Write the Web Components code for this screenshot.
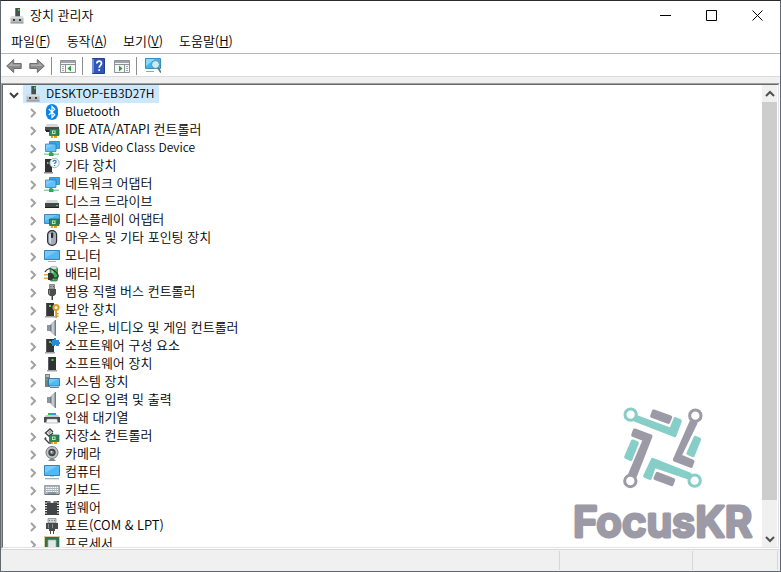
<!DOCTYPE html>
<html lang="ko">
<head>
<meta charset="utf-8">
<title>장치 관리자</title>
<style>
  html, body { height: 100%; margin: 0; }
  body {
    background: #4a4f58;
    color: #000;
    font: 350 13px/16px "Noto Sans CJK KR", sans-serif;
  }
  .latin { font-size: 12px; }
</style>
</head>
<body>
<app-window>
  <title-bar slot="title" icon="root">장치 관리자</title-bar>
  <menu-bar slot="menu">
    <menu-entry key="F">파일</menu-entry>
    <menu-entry key="A">동작</menu-entry>
    <menu-entry key="V">보기</menu-entry>
    <menu-entry key="H">도움말</menu-entry>
  </menu-bar>
  <tool-bar slot="tools"></tool-bar>
  <tree-panel>
    <tree-node icon="root" class="latin" root>DESKTOP-EB3D27H</tree-node>
    <brand-mark slot="overlay"></brand-mark>
  </tree-panel>
  <status-bar slot="status"></status-bar>
</app-window>

<script>
const DEVICES = [
  ['bluetooth', 'Bluetooth'],
  ['ide', 'IDE ATA/ATAPI 컨트롤러'],
  ['network', 'USB Video Class Device'],
  ['unknown', '기타 장치'],
  ['network', '네트워크 어댑터'],
  ['disk', '디스크 드라이브'],
  ['display', '디스플레이 어댑터'],
  ['mouse', '마우스 및 기타 포인팅 장치'],
  ['monitor', '모니터'],
  ['battery', '배터리'],
  ['usb', '범용 직렬 버스 컨트롤러'],
  ['security', '보안 장치'],
  ['speaker', '사운드, 비디오 및 게임 컨트롤러'],
  ['component', '소프트웨어 구성 요소'],
  ['software', '소프트웨어 장치'],
  ['system', '시스템 장치'],
  ['speaker', '오디오 입력 및 출력'],
  ['printer', '인쇄 대기열'],
  ['storage', '저장소 컨트롤러'],
  ['camera', '카메라'],
  ['computer', '컴퓨터'],
  ['keyboard', '키보드'],
  ['firmware', '펌웨어'],
  ['port', '포트(COM & LPT)'],
  ['cpu', '프로세서']
];

const card = `
  <path fill="#2d8a56" stroke="#1c5b38" stroke-width=".7" d="M5.500 7h9.500v6.500H5.500z"/>
  <path fill="#bfe6c8" d="M8 8.500h3.500V12H8z"/><path fill="#2a6a48" d="M9 9.500h1.500v1.500H9zM12.500 9h1.500v1h-1.500zM12.500 11h1.500v1h-1.500z"/>
  <path fill="#e8a316" d="M7 14h2v2H7zM10 14h3v2h-3z"/>`;

const tower = `
  <path fill="#333537" d="M2 1h8v13H2z"/><path fill="#55585a" d="M2 1h1v13H2z"/>
  <path fill="#3ee04a" d="M5 3h2v2H5z"/><path fill="#a2a5a8" d="M1 14h10v1.500H1z"/>`;

const ICONS = {
  root: `
    <path fill="#4c4f52" d="M6 0h5v9H6z"/><path fill="#777b7e" d="M6 0h1v9H6z"/><path fill="#35dc45" d="M9 1h1.500v2H9z"/>
    <path fill="#b8babc" d="M2 8.500h12l.5 2V15h-13v-4.500z"/><path fill="#dcdedf" d="M2 8.500h12v2H2z"/>
    <path fill="#3b3d3f" d="M4 11h2v2H4zM10 11h2v2h-2z"/><path fill="#85888a" d="M1.500 14.500h13v1h-13z"/>`,
  bluetooth: `
    <rect x="2" width="12" height="16" rx="6" fill="#0a84e8"/>
    <path fill="none" stroke="#fff" stroke-width="1.200" d="M4.800 5l6 5.800L8 13.500v-11l2.800 2.700-6 5.800"/>`,
  ide: `
    <path fill="#d4d6d8" d="M3 2h10l2 3H1z"/><path fill="#4a4d50" d="M1 5h14v4H1z"/>
    <path fill="#24272a" d="M2 8h5v2H2z"/>${card}`,
  network: `
    <path fill="#3aa5e8" stroke="#2273ab" stroke-width=".7" d="M5.500 1.500h10v7h-10z"/>
    <path fill="#5fc0fa" stroke="#2273ab" stroke-width=".7" d="M1.500 4h10.500v7.500H1.500z"/>
    <path fill="#9fdcff" d="M2 4.500h8L2 9z" opacity=".5"/>
    <path fill="#5a9c6e" d="M5.500 12h3v1h-3z"/><path fill="#8fd4a6" d="M0 13.500h15v1.500H0z"/><path fill="#2aa953" d="M5 13h4.500v3H5z"/>`,
  unknown: `
    <path fill="#2f3133" d="M1 1h7v13H1z"/><path fill="#3ee04a" d="M3 4h1.500v2H3z"/><path fill="#8a8d90" d="M0 14h9v1.500H0z"/>
    <circle cx="10.500" cy="5" r="4.700" fill="#f3f6f8" stroke="#9ba4aa" stroke-width=".8"/>
    <path fill="none" stroke="#3682b6" stroke-width="1.200" d="M9 3.800c.1-2 3.300-1.700 3.100 0-.1 1-1.500 1.100-1.500 2.200M10.600 7v1.100"/>`,
  disk: `
    <path fill="#d6d8da" d="M3 6h10l2 3.500H1z"/><path fill="#44474a" d="M1 9h14v5H1z"/>
    <path fill="#222" d="M1 13h14v1H1z"/><path fill="#3ee04a" d="M12 11h2v1h-2z"/>`,
  display: `
    <path fill="#4fb4f2" stroke="#2273ab" stroke-width=".8" d="M.500 2.500h15v9H.500z"/>
    <path fill="#8bd4ff" d="M1 3h12L1 9z" opacity=".6"/>${card}`,
  mouse: `
    <rect x="3.600" y=".6" width="9" height="14.800" rx="4.300" fill="#a5acb5" stroke="#2c3036" stroke-width="1.200"/>
    <path fill="#d2d7dd" d="M5 4h2v10C6 13.500 5 12 5 10z"/>
    <rect x="7" y="2.500" width="2.200" height="5.500" rx="1" fill="#25282c"/>`,
  monitor: `
    <path fill="#53b7f4" stroke="#2579b3" stroke-width=".9" d="M.500 2.500h15v9H.500z"/>
    <path fill="#9bdcff" d="M1 3h12L1 10z" opacity=".5"/><path fill="#97b7cc" d="M4 13h8v1H4z"/>`,
  battery: `
    <rect x="6" y="1" width="7.500" height="14" rx="1.500" fill="#3cae52" stroke="#27703a" stroke-width=".7"/>
    <path fill="#9ce3a8" d="M7.500 2h2v12h-2z"/><path fill="#d9dcde" d="M6.500 1h6v2h-6z"/>
    <path fill="none" stroke="#333" stroke-width="1.200" d="M1 6c2-4 6-4 8-2s4 2 5 5c1 3-2 4-6 2"/>
    <path fill="#333638" d="M4 7h3c2 0 3 1.500 3 3.500S9 14 7 14H4z"/><path fill="#e2ab39" d="M0 8h4v1.500H0zM0 11.500h4V13H0z"/>`,
  usb: `
    <path fill="#a5a8ab" stroke="#65686a" stroke-width=".7" d="M5.500.500h5V5h-5z"/><path fill="#55585a" d="M6.500 2h1v1h-1zM9 2h1v1H9z"/>
    <path fill="#4c4e50" d="M4 5h8v5l-2 2H6l-2-2z"/><path fill="#85878a" d="M5 6h1v4H5z"/><path fill="#3c3e40" d="M7.500 12h1.500v4H7.500z"/>`,
  security: `${tower}
    <circle cx="12" cy="5.500" r="2.600" fill="#fff" stroke="#d99c2b" stroke-width="2"/>
    <path fill="#d99c2b" d="M11.200 8h1.800v8h-1.800zM13 11h1.500v1.500H13zM13 13.500h1.500V15H13z"/>`,
  speaker: `
    <path fill="#8b959d" d="M3 5h3v6H3z"/><path fill="#9aa4ac" d="M6 5l5-5v16l-5-5z"/>
    <path fill="#c3cbd0" d="M8 3.500l2-2v13l-2-2z"/><path fill="#727d86" d="M11 0h1v16h-1zM6 5h1v6H6z"/>`,
  component: `${tower}
    <path fill="#2b8bd3" d="M8 2h2V0h2v2h3v2h1v2h-1v2h-3V7h-1v1H8V6H7V4h1z"/>`,
  software: `
    <path fill="#303234" d="M4 1h8v13H4z"/><path fill="#5c5f61" d="M4 1h1v13H4z"/>
    <path fill="#3ee04a" d="M7.500 3h2v2h-2z"/><path fill="#a2a5a8" d="M3 14h10v1.500H3z"/>`,
  system: `
    <path fill="#777d82" d="M1 0h5v13H1z"/><path fill="#b7bcc0" d="M2 1h3v2H2z"/><path fill="#3ee04a" d="M2 5h1.500v1H2z"/>
    <path fill="#54b8f5" stroke="#236b9b" stroke-width=".8" d="M4.500 4.500h11v7.500h-11z"/>
    <path fill="#9bdcff" d="M5 5h9l-9 5z" opacity=".5"/><path fill="#668193" d="M6 13h9v1H6z"/>`,
  printer: `
    <path fill="#3199e7" d="M4 3h8v3H4z"/><path fill="#35b765" d="M4 3h3v2H4z"/><path fill="#c6c9cc" d="M2 5h12l2 3H0z"/>
    <path fill="#4a4d50" d="M0 7h16v5.500H0z"/><path fill="#f6f6f6" stroke="#888" stroke-width=".5" d="M3 9h10l1 4H2z"/>`,
  storage: `
    <path fill="none" stroke="#3f4244" stroke-width="1.400" d="M9 4L6 1 1.500 5 5 8l4-3M2 9.500l-1 1.500 4 4h2"/>
    <path fill="#a9acae" d="M4 4l2-2 2 2-3 3z"/>${card}`,
  camera: `
    <circle cx="8" cy="6.500" r="6" fill="#c2c6c9" stroke="#73777a"/><circle cx="8" cy="6.500" r="3.700" fill="#424547"/>
    <circle cx="8" cy="6.500" r="1.800" fill="#82929f"/><circle cx="7.300" cy="5.800" r=".8" fill="#fff"/>
    <path fill="#85888b" d="M6 13h4l2 2H4z"/>`,
  computer: `
    <path fill="#53b7f4" stroke="#2579b3" stroke-width=".9" d="M.500 1.500h15v10H.500z"/>
    <path fill="#a1dfff" d="M1 2h12L1 9z" opacity=".5"/><path fill="#b6d1e2" d="M6 12h4v1H6z"/><path fill="#9bb4c4" d="M1 14h14v1.300H1z"/>`,
  keyboard: `
    <path fill="#a9b3ba" stroke="#818b92" stroke-width=".7" d="M.500 3.500h15v9H.500z"/>
    <path stroke="#fff" stroke-dasharray="1.500 .7" d="M2 5.500h12M2 7.500h12M2 9.500h12"/><path stroke="#66727a" d="M4 11h8M1 12.500h14"/>`,
  firmware: `
    <path fill="none" stroke="#303234" stroke-width="2" stroke-dasharray="1.500 1" d="M2 1v14M14 1v14"/>
    <path fill="#424547" d="M3 1h10v14H3z"/><path fill="#727578" d="M3 1h10v2H3z"/><circle cx="8" cy="1.500" r="1.500" fill="#fff"/>`,
  port: `
    <path fill="#d2d5d7" stroke="#7c8083" stroke-width=".7" d="M4 .500h8V5H4z"/><path fill="#707477" d="M5 2h1v1H5zM7.500 2h1v1h-1zM10 2h1v1h-1z"/>
    <path fill="#47494b" d="M2 5h12v6H2z"/><path fill="#8a8d8f" d="M4 6h1v4H4zM8 6h1v4H8z"/>
    <path fill="#47494b" d="M5 11h6v2H5zM6 13h1v3H6zM9 13h1v3H9z"/>`,
  cpu: `
    <path fill="none" stroke="#c4932a" stroke-dasharray="1 1" d="M.500.500h15v15H.500z"/><path fill="#2d7551" d="M1 1h14v14H1z"/>
    <path fill="#e4e7e8" stroke="#a6aaad" stroke-width=".7" d="M4 4h8v8H4z"/>`,
  back: `<path fill="#8b8b8b" stroke="#6d6d6d" stroke-linejoin="round" d="M.700 8l7-6.500v4h7.500v5H7.700v4z"/><path fill="#adadad" d="M2.500 8L6 4.500v2h8v1.500z"/>`,
  forward: `<path fill="#8b8b8b" stroke="#6d6d6d" stroke-linejoin="round" d="M15.300 8L8.300 1.500v4H.800v5h7.500v4z"/><path fill="#adadad" d="M13.500 8L10 4.500v2H2v1.500z"/>`,
  console: `
    <path fill="#f6f6f6" stroke="#8c9298" d="M.500 2.500h15v12H.500z"/><path fill="#9ca3aa" d="M1 3h14v2H1z"/>
    <path stroke="#8c9298" d="M1 6.500h14M5.500 7v8"/><path stroke="#a2a8ad" d="M2 8.500h2M2 10.500h2M2 12.500h2"/>
    <path fill="#25a135" d="M11 7.500v6L7.500 10.500z"/>`,
  action: `
    <path fill="#f6f6f6" stroke="#8c9298" d="M.500 2.500h15v12H.500z"/><path fill="#9ca3aa" d="M1 3h14v2H1z"/>
    <path stroke="#8c9298" d="M1 6.500h14M10.500 7v8"/><path stroke="#a2a8ad" d="M12 8.500h2M12 10.500h2M12 12.500h2"/>
    <path fill="#25a135" d="M5 7.500v6L8.500 10.500z"/>`,
  help: `
    <path fill="#3156b9" stroke="#243f91" d="M1.500.500h12v15h-12z"/><path fill="#7090db" d="M1 1h2v14H1z"/>
    <path fill="none" stroke="#fff" stroke-width="1.700" d="M5.800 5.500c0-3.200 4.700-3 4.700-.2 0 2-2.300 2-2.300 4.500M8.200 11.200V13"/>`,
  scan: `
    <path fill="#48b2e9" stroke="#348dbe" d="M.500.500h15v10H.500z"/><path fill="#8bd8fb" d="M1 1h9L1 8z"/>
    <path fill="#8fa6b3" d="M1 13h8v1H1z"/><circle cx="10.500" cy="6.500" r="4" fill="#c6ebfa" stroke="#648999"/>
    <path stroke="#607985" stroke-width="1.700" d="M13 10l3 4.500"/>`
};

class SysIcon extends HTMLElement {
  connectedCallback() {
    const root = this.attachShadow({ mode: 'open' });
    root.innerHTML = `
      <style>
        :host { display: block; flex: none; width: 16px; height: 16px; }
        svg { display: block; width: 100%; height: 100%; }
      </style>
      <svg viewBox="0 0 16 16" aria-hidden="true">${ICONS[this.getAttribute('name')]}</svg>`;
  }
}

class AppWindow extends HTMLElement {
  constructor() {
    super();
    this.attachShadow({ mode: 'open' }).innerHTML = `
      <style>
        :host {
          display: flex;
          flex-direction: column;
          box-sizing: border-box;
          height: 100%;
          border: 1px solid #626772;
          border-top-color: #2b2b2d;
          background: #f0f0f0;
        }
        main { display: flex; flex: 1; min-height: 0; padding-top: 6px; }
      </style>
      <slot name="title"></slot>
      <slot name="menu"></slot>
      <slot name="tools"></slot>
      <main><slot></slot></main>
      <slot name="status"></slot>`;
  }
}

class TitleBar extends HTMLElement {
  connectedCallback() {
    this.attachShadow({ mode: 'open' }).innerHTML = `
      <style>
        :host { display: flex; align-items: center; height: 30px; padding-left: 8px; background: #fff; }
        sys-icon { margin-right: 5px; }
        h1 { flex: 1; margin: 0 0 2px; font: inherit; }
        button { display: grid; place-items: center; width: 46px; height: 30px; padding: 0 0 2px; border: 0; background: none; }
        button:hover { background: #e5e5e5; }
        svg { width: 11px; height: 11px; fill: none; stroke: #000; }
      </style>
      <sys-icon name="${this.getAttribute('icon')}"></sys-icon>
      <h1><slot></slot></h1>
      <button type="button" aria-label="최소화"><svg viewBox="0 0 11 11"><path d="M0 5.500h11"/></svg></button>
      <button type="button" aria-label="최대화"><svg viewBox="0 0 11 11"><path d="M.500.500h10v10H.500z"/></svg></button>
      <button type="button" aria-label="닫기"><svg viewBox="0 0 11 11"><path d="M.500.500l10 10M10.500.500l-10 10"/></svg></button>`;
  }
}

class MenuBar extends HTMLElement {
  constructor() {
    super();
    this.attachShadow({ mode: 'open' }).innerHTML = `
      <style>
        :host { display: flex; height: 22px; padding-left: 2px; border-bottom: 1px solid #b4b7bf; background: #fff; }
      </style>
      <slot></slot>`;
  }
}

class MenuEntry extends HTMLElement {
  connectedCallback() {
    this.attachShadow({ mode: 'open' }).innerHTML = `
      <style>
        :host { display: block; }
        button { height: 20px; padding: 0 8px; border: 0; background: none; color: inherit; font: inherit; }
        button:hover { background: #e5f3ff; }
      </style>
      <button type="button"><slot></slot>(<u>${this.getAttribute('key')}</u>)</button>`;
  }
}

class ToolBar extends HTMLElement {
  constructor() {
    super();
    const tool = (name, label) =>
      `<button type="button" aria-label="${label}"><sys-icon name="${name}"></sys-icon></button>`;
    this.attachShadow({ mode: 'open' }).innerHTML = `
      <style>
        :host { display: flex; align-items: center; height: 22px; padding: 0 1px; border-bottom: 1px solid #dcdcdc; background: #fff; }
        button { padding: 2px 3px 0 4px; border: 0; background: none; }
        i { width: 1px; height: 18px; margin: 2px 4px 0 3px; background: #8d8d8d; }
      </style>
      ${tool('back', '뒤로')}${tool('forward', '앞으로')}<i></i>
      ${tool('console', '콘솔 트리 표시/숨기기')}<i></i>
      ${tool('help', '도움말')}${tool('action', '작업 창 표시/숨기기')}<i></i>
      ${tool('scan', '하드웨어 변경 사항 검색')}`;
  }
}

class TreeNode extends HTMLElement {
  connectedCallback() {
    this.attachShadow({ mode: 'open' }).innerHTML = `
      <style>
        :host { display: flex; align-items: center; height: 18px; padding-left: 21px; white-space: nowrap; }
        :host([root]) { padding-left: 2px; }
        button { display: grid; place-items: center; width: 18px; height: 18px; margin-right: 2px; padding: 2px 0 0; border: 0; background: none; }
        :host([root]) button { margin-right: 0; }
        svg { width: 10px; height: 10px; fill: none; stroke: #a2a2a2; stroke-width: 2; }
        :host([root]) svg { stroke: #404040; }
        .label { display: flex; align-items: center; gap: 5px; height: 18px; }
        .text { margin-bottom: 2px; }
        :host([root]) .label { padding: 0 4px 0 2px; background: #cce8ff; }
      </style>
      <button type="button" aria-label="펼치기">
        <svg viewBox="0 0 10 10"><path d="${this.hasAttribute('root') ? 'M1 3l4 4 4-4' : 'M3 1l4 4-4 4'}"/></svg>
      </button>
      <span class="label"><sys-icon name="${this.getAttribute('icon')}"></sys-icon><span class="text"><slot></slot></span></span>`;
  }
}

class ScrollRail extends HTMLElement {
  constructor() {
    super();
    this.attachShadow({ mode: 'open' }).innerHTML = `
      <style>
        :host { display: flex; flex: none; flex-direction: column; width: 15px; margin-right: 1px; background: #f0f0f0; }
        button { display: grid; place-items: center; width: 100%; height: 17px; padding: 0; border: 0; background: none; }
        svg { width: 10px; height: 10px; fill: none; stroke: #505050; stroke-width: 2; }
        .track { flex: 1; min-height: 0; }
        .thumb { height: 93%; background: #cdcdcd; }
      </style>
      <button type="button" aria-label="위로"><svg viewBox="0 0 10 10"><path d="M1 7l4-4 4 4"/></svg></button>
      <div class="track"><div class="thumb"></div></div>
      <button type="button" aria-label="아래로"><svg viewBox="0 0 10 10"><path d="M1 3l4 4 4-4"/></svg></button>`;
  }
}

class TreePanel extends HTMLElement {
  constructor() {
    super();
    this.attachShadow({ mode: 'open' }).innerHTML = `
      <style>
        :host {
          display: flex;
          flex: 1;
          min-width: 0;
          box-sizing: border-box;
          border: 1px solid;
          border-color: #a0a0a0 #fff #fff #a0a0a0;
        }
        .inner {
          display: flex;
          position: relative;
          flex: 1;
          min-width: 0;
          border: 1px solid;
          border-color: #696969 #e3e3e3 #e3e3e3 #696969;
          background: #fff;
        }
        .rows { flex: 1; min-width: 0; overflow: hidden; }
        .overlay { position: absolute; right: 25px; bottom: 4px; pointer-events: none; }
      </style>
      <div class="inner">
        <div class="rows"><slot></slot></div>
        <scroll-rail></scroll-rail>
        <div class="overlay"><slot name="overlay"></slot></div>
      </div>`;
  }

  connectedCallback() {
    DEVICES.forEach(([icon, name]) => {
      const node = document.createElement('tree-node');
      node.setAttribute('icon', icon);
      node.textContent = name;
      // purely Latin names are set one size smaller
      node.classList.toggle('latin', /^[\w ]+$/.test(name));
      this.append(node);
    });
  }
}

class BrandMark extends HTMLElement {
  constructor() {
    super();
    this.attachShadow({ mode: 'open' }).innerHTML = `
      <style>
        :host { display: flex; flex-direction: column; align-items: center; gap: 14px; --teal: #86cec7; --grey: #9b9aa6; }
        svg { display: block; overflow: visible; }
        .teal { fill: var(--teal); stroke: var(--teal); }
        .grey { fill: var(--grey); stroke: var(--grey); }
        .ring { fill: #fff; stroke-width: 9; }
        .word { font: 600 42px "Inter", sans-serif; stroke-width: 3; }
      </style>
      <svg width="80" height="82" viewBox="187 50 240 246" stroke-width="11" stroke-linejoin="round" aria-hidden="true">
        <path class="teal" d="M230 81l101 37 13-32 14 6-16 43-118-46z"/>
        <path class="grey" d="M279 63l50 18-6 14-49-18z"/>
        <path class="grey" d="M392 94l-50 114 49 19 5-14-39-16 48-99z"/>
        <path class="teal" d="M404 142l12 5-19 48-14-6z"/>
        <path class="teal" d="M388 252l-112-44-23 49 15 6 13-36 105 36z"/>
        <path class="grey" d="M290 250l48 19-5 13-49-18z"/>
        <path class="grey" d="M208 252l44-104-35-14 5-14 48 18-46 118z"/>
        <path class="teal" d="M216 153l13 5-19 48-14-6z"/>
        <circle class="ring teal" cx="210" cy="73" r="17"/>
        <circle class="ring grey" cx="404" cy="76" r="17"/>
        <circle class="ring teal" cx="402" cy="271" r="17"/>
        <circle class="ring grey" cx="209" cy="272" r="17"/>
      </svg>
      <svg width="180" height="40" stroke-linejoin="round">
        <text class="word grey" x="0" y="34">FocusKR</text>
      </svg>`;
  }
}

class StatusBar extends HTMLElement {
  constructor() {
    super();
    this.attachShadow({ mode: 'open' }).innerHTML = `
      <style>
        :host { display: flex; height: 19px; padding: 1px 2px 1px 0; border-top: 1px solid #d7d7d7; background: #f0f0f0; }
        span { box-sizing: border-box; border-right: 1px solid #d7d7d7; }
        .message { flex: 1; }
        .wide { width: 133px; }
        .narrow { width: 85px; }
      </style>
      <span class="message"></span><span class="wide"></span><span class="narrow"></span>`;
  }
}

customElements.define('sys-icon', SysIcon);
customElements.define('title-bar', TitleBar);
customElements.define('menu-bar', MenuBar);
customElements.define('menu-entry', MenuEntry);
customElements.define('tool-bar', ToolBar);
customElements.define('tree-node', TreeNode);
customElements.define('scroll-rail', ScrollRail);
customElements.define('tree-panel', TreePanel);
customElements.define('brand-mark', BrandMark);
customElements.define('status-bar', StatusBar);
customElements.define('app-window', AppWindow);
</script>
</body>
</html>
